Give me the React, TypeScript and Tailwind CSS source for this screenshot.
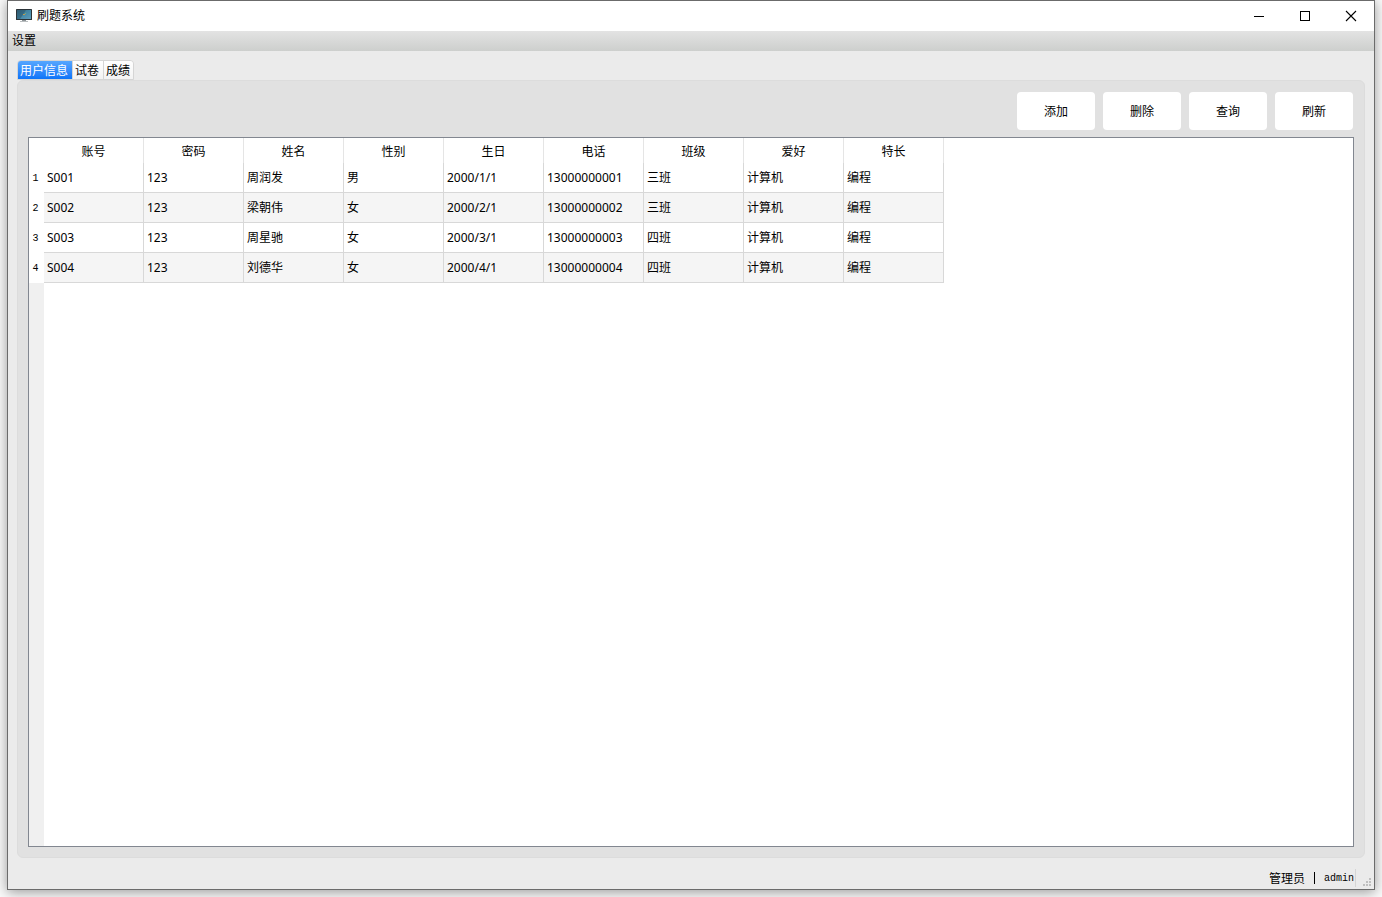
import { useState } from 'react';
import clsx from 'clsx';

const tabs = ['用户信息', '试卷', '成绩'];
const actions = ['添加', '删除', '查询', '刷新'];
const columns = ['账号', '密码', '姓名', '性别', '生日', '电话', '班级', '爱好', '特长'];

const users = [
    ['S001', '123', '周润发', '男', '2000/1/1', '13000000001', '三班', '计算机', '编程'],
    ['S002', '123', '梁朝伟', '女', '2000/2/1', '13000000002', '三班', '计算机', '编程'],
    ['S003', '123', '周星驰', '女', '2000/3/1', '13000000003', '四班', '计算机', '编程'],
    ['S004', '123', '刘德华', '女', '2000/4/1', '13000000004', '四班', '计算机', '编程'],
];

function AppIcon() {
    return (
        <svg className="w-4 h-4" viewBox="0 0 16 16" aria-hidden="true">
            <defs>
                <linearGradient id="screen" x1="0" y1="0" x2="1" y2="1">
                    <stop offset="0" stopColor="#3a6a80" />
                    <stop offset="0.5" stopColor="#4488a6" />
                    <stop offset="1" stopColor="#5d9cbb" />
                </linearGradient>
            </defs>
            <rect x="0" y="1" width="16" height="11" rx="0.5" fill="#2b3338" />
            <rect x="1" y="2" width="14" height="9" fill="url(#screen)" />
            <path d="M1 2h9L4 11H1z" fill="#234b62" opacity="0.45" />
            <rect x="7" y="6" width="2" height="1" fill="#c39a4b" />
            <rect x="9" y="5" width="1" height="1" fill="#7fae6a" />
            <rect x="6" y="12" width="4" height="1" fill="#8f9699" />
            <rect x="4" y="13" width="8" height="1" fill="#b9bdbf" />
        </svg>
    );
}

function TitleBar() {
    const control = 'w-[46px] h-full flex items-center justify-center hover:bg-[#e5e5e5]';

    return (
        <header className="h-[30px] shrink-0 flex items-center bg-white pl-2">
            <AppIcon />
            <h1 className="ml-[5px] grow">刷题系统</h1>
            <div className="flex h-full pb-px">
                <button className={control} aria-label="最小化">
                    <svg className="w-3 h-3" viewBox="0 0 12 12">
                        <path d="M1 6.5h10" stroke="#000" />
                    </svg>
                </button>
                <button className={control} aria-label="最大化">
                    <svg className="w-3 h-3" viewBox="0 0 12 12">
                        <rect x="1.5" y="1.5" width="9" height="9" fill="none" stroke="#000" />
                    </svg>
                </button>
                <button className={control} aria-label="关闭">
                    <svg className="w-3 h-3" viewBox="0 0 12 12">
                        <path d="M1 1l10 10M11 1l-10 10" stroke="#000" strokeWidth="1.1" />
                    </svg>
                </button>
            </div>
        </header>
    );
}

function UserTable() {
    return (
        <div className="grow min-h-0 flex overflow-auto border border-[#828790] bg-white bg-linear-to-r from-[#f0f0f0] from-[15px] to-white to-[15px]">
            <div className="grow">
                <table className="w-[915px] table-fixed border-separate border-spacing-0 bg-white">
                    <colgroup>
                        <col className="w-[15px]" />
                        {columns.map((name) => (
                            <col key={name} className="w-[100px]" />
                        ))}
                    </colgroup>
                    <thead>
                        <tr className="h-[25px]">
                            <td className="p-0" />
                            {columns.map((name) => (
                                <th key={name} scope="col" className="p-0 pt-0.5 font-normal text-center border-r border-[#e5e5e5]">
                                    {name}
                                </th>
                            ))}
                        </tr>
                    </thead>
                    <tbody>
                        {users.map((user, row) => (
                            <tr key={user[0]} className="h-[30px]">
                                <th scope="row" className="p-0 pt-0.5 pr-0.5 font-normal text-center text-[10px] font-['Liberation_Mono',monospace]">
                                    {row + 1}
                                </th>
                                {user.map((value, i) => (
                                    <td
                                        key={columns[i]}
                                        className={clsx(
                                            'py-0 pl-[3px] pr-0 border-r border-b border-[#d8d8d8]',
                                            row % 2 === 1 && 'bg-[#f5f5f5]'
                                        )}
                                    >
                                        {value}
                                    </td>
                                ))}
                            </tr>
                        ))}
                    </tbody>
                </table>
            </div>
        </div>
    );
}

function StatusBar() {
    return (
        <footer className="h-[31px] shrink-0 flex items-center justify-end pt-[10px] pb-[2px] pr-[2px]">
            <span className="pt-[3px]">管理员</span>
            <span className="w-px h-3 mx-[9px] bg-black" />
            <span className="pt-[3px] pr-px text-[10px] font-['Liberation_Mono',monospace]">admin</span>
            <span className="w-px h-[18px] bg-[#d5d5d5]" />
            <svg className="w-[9px] h-[9px] ml-[7px] self-end" viewBox="0 0 9 9" fill="#bfbfbf" aria-hidden="true">
                <path d="M6 0h2v2h-2zM3 3h2v2h-2zM6 3h2v2h-2zM0 6h2v2h-2zM3 6h2v2h-2zM6 6h2v2h-2z" />
            </svg>
        </footer>
    );
}

export default function App() {
    const [active, setActive] = useState(0);

    return (
        <div className="h-screen px-[7px] pb-[7px] bg-[#fafafa] overflow-hidden text-xs text-black font-['Noto_Sans','Noto_Sans_CJK_SC',sans-serif]">
            <div className="h-full flex flex-col border border-[#6b6b6b] bg-[#ebebeb] shadow-[0_2px_12px_rgba(0,0,0,0.4)]">
                <TitleBar />

                <nav className="h-5 shrink-0 flex items-center pl-1 bg-linear-to-b from-[#e3e3e3] to-[#cdcfcd]">
                    <button>设置</button>
                </nav>

                <main className="grow min-h-0 flex flex-col px-[9px] pt-[9px]">
                    <div role="tablist" className="self-start h-5 flex rounded-t border border-[#d5d5d5] overflow-hidden">
                        {tabs.map((tab, i) => (
                            <button
                                key={tab}
                                role="tab"
                                aria-selected={active === i}
                                onClick={() => setActive(i)}
                                className={clsx(
                                    'pt-0.5 pl-[2px] pr-[4px] border-r border-[#d5d5d5] last:border-r-0 last:pr-[3px]',
                                    active === i
                                        ? 'bg-linear-to-b from-[#55a6ff] to-[#0a74f8] text-white'
                                        : 'bg-linear-to-b from-white to-[#f3f3f3]'
                                )}
                            >
                                {tab}
                            </button>
                        ))}
                    </div>

                    <section role="tabpanel" className="grow min-h-0 flex flex-col p-[10px] rounded-md border border-[#dcdcdc] bg-[#e1e1e1]">
                        <div className="flex justify-end gap-2 pt-px pb-[7px] pr-px">
                            {actions.map((action) => (
                                <button key={action} className="w-[78px] h-[38px] pt-px rounded bg-white hover:bg-[#f5f5f5]">
                                    {action}
                                </button>
                            ))}
                        </div>
                        <UserTable />
                    </section>
                </main>

                <StatusBar />
            </div>
        </div>
    );
}
